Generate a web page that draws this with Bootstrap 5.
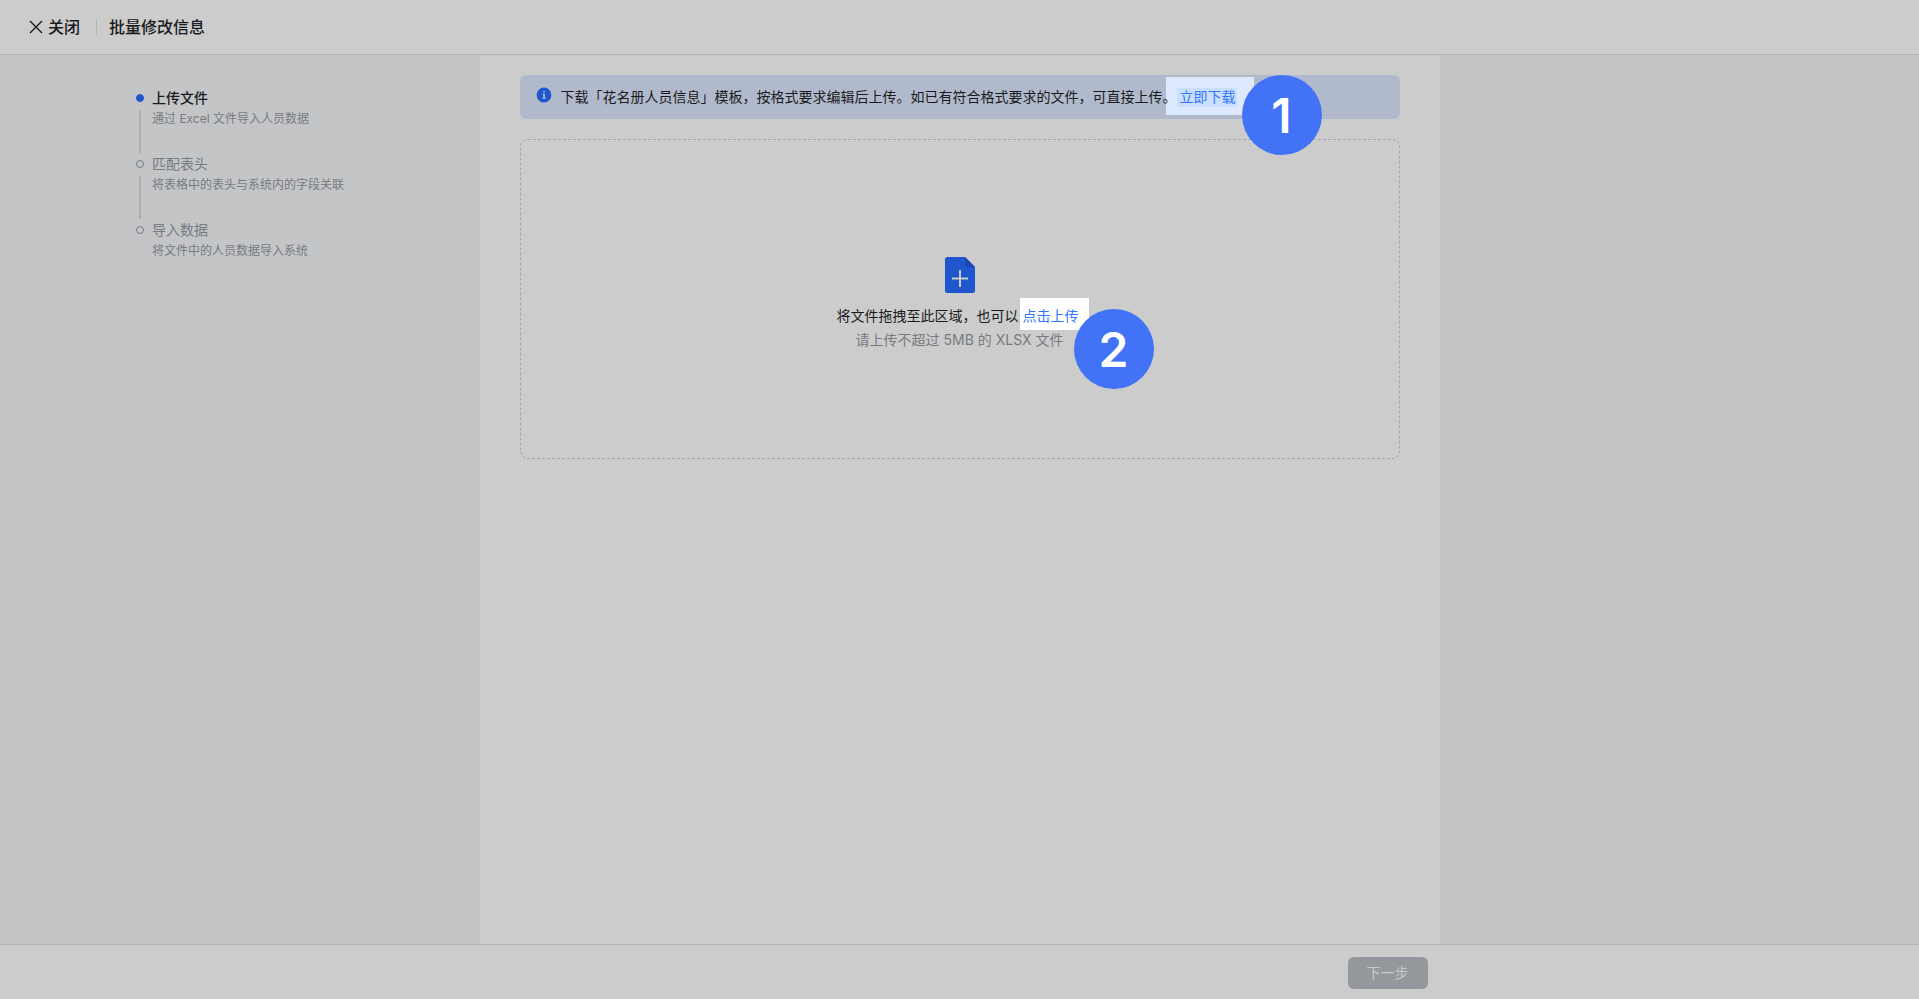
<!DOCTYPE html>
<html lang="zh-CN">
<head>
<meta charset="utf-8">
<meta name="viewport" content="width=device-width, initial-scale=1">
<title>批量修改信息</title>
<link href="https://cdn.jsdelivr.net/npm/bootstrap@5.3.0/dist/css/bootstrap.min.css" rel="stylesheet">
<style>
body { font-family: Inter, "Noto Sans CJK SC", sans-serif; font-size: 14px; line-height: 22px; color: #191b20; background: #c4c5c7; }
.topbar { height: 55px; padding: 0 28px; background: #ccc; border-bottom: 1px solid #b0b2b4; }
.close-btn { font-size: 16px; line-height: 24px; color: #191b20; font-weight: 500; }
.split { width: 1px; height: 16px; background: #b0b2b4; margin: 0 12px 0 16px; }
.page-title { font-size: 16px; line-height: 24px; font-weight: 500; }
.side { flex: 1 1 0; min-width: 0; }
.steps { padding: 32px 0 0 136px; }
.step { height: 66px; color: #777b82; }
.step-mark { width: 8px; padding-top: 7px; }
.step-dot { width: 8px; height: 8px; border: 1px solid #777b82; border-radius: 50%; }
.step-line { width: 2px; height: 43px; margin-top: 8px; background: #abadaf; }
.step-on .step-title { color: #191b20; font-weight: 500; }
.step-on .step-dot { background: #1f56cd; border-color: #1f56cd; }
.step-note { font-size: 12px; line-height: 20px; }
.work { flex: 0 1 960px; background: #ccc; padding: 20px 40px; }
.tip { background: #b1bacc; border-radius: 6px; padding: 11px 16px; min-height: 44px; }
.tip-icon { margin: 1px 9px 0 0; }
.spot { position: relative; z-index: 0; }
.spot::before { content: ""; position: absolute; z-index: -1; }
.spot a, .spot button { color: #3177fb; font-size: 14px; line-height: 22px; }
.spot-download::before { inset: -11px -17px -8px -11px; background: #dee8fe; }
.spot-download a { display: block; line-height: 18px; padding: 0 1px 1px 3px; background: #cadefe; }
.spot-upload::before { inset: -7px -10px -3px -3px; background: #fff; }
.num { position: absolute; z-index: 2; width: 80px; height: 80px; border-radius: 50%; background: #4273f7; color: #fff; font-size: 48px; line-height: 82px; font-weight: 600; text-align: center; }
.num-one { left: 65px; top: -13px; }
.num-two { left: 51px; top: 4px; }
.drop { height: 320px; margin-top: 20px; border: 1px dashed #a5a7a9; border-radius: 8px; padding-top: 117px; }
.drop-line { margin-top: 12px; }
.hint { color: #777b82; margin-top: 2px; }
.bottombar { height: 55px; background: #ccc; border-top: 1px solid #b0b2b4; }
.bottombar-inner { max-width: 960px; padding: 12px; }
.next-btn, .next-btn:disabled { width: 80px; height: 32px; padding: 0 0 2px; border: 0; border-radius: 6px; background: #94979c; color: #c8c9ca; opacity: 1; font-size: 14px; }
</style>
</head>
<body>
<div class="d-flex flex-column min-vh-100">
  <header class="topbar d-flex align-items-center">
    <button type="button" class="close-btn btn p-0 border-0 d-flex align-items-center">
      <svg class="me-1" width="16" height="16" viewBox="0 0 16 16" fill="none" stroke="currentColor" stroke-width="1.4" aria-hidden="true"><path d="M2 2l12 12M14 2L2 14"/></svg>关闭
    </button>
    <span class="split"></span>
    <h1 class="page-title mb-0">批量修改信息</h1>
  </header>

  <div class="d-flex flex-grow-1">
    <aside class="side">
      <ol class="steps list-unstyled mb-0">
        <li class="step step-on d-flex gap-2">
          <div class="step-mark d-flex flex-column align-items-center"><span class="step-dot"></span><span class="step-line"></span></div>
          <div><div class="step-title">上传文件</div><div class="step-note">通过 Excel 文件导入人员数据</div></div>
        </li>
        <li class="step d-flex gap-2">
          <div class="step-mark d-flex flex-column align-items-center"><span class="step-dot"></span><span class="step-line"></span></div>
          <div><div class="step-title">匹配表头</div><div class="step-note">将表格中的表头与系统内的字段关联</div></div>
        </li>
        <li class="step d-flex gap-2">
          <div class="step-mark d-flex flex-column align-items-center"><span class="step-dot"></span></div>
          <div><div class="step-title">导入数据</div><div class="step-note">将文件中的人员数据导入系统</div></div>
        </li>
      </ol>
    </aside>

    <main class="work">
      <div class="tip d-flex">
        <svg class="tip-icon flex-shrink-0" width="16" height="16" viewBox="0 0 16 16" aria-hidden="true"><circle cx="8" cy="8" r="7.4" fill="#1f56cd"/><path d="M7.200 4h1.700v1.600H7.200zM6.500 6.800h2.400v4h.9v.9H6.300v-.9h.9V7.700h-.7z" fill="#b1bacc"/></svg>
        <div class="d-flex flex-wrap align-items-center">
          <span class="position-relative z-1">下载「花名册人员信息」模板，按格式要求编辑后上传。如已有符合格式要求的文件，可直接上传。</span>
          <span class="spot spot-download"><a href="#" class="text-decoration-none">立即下载</a><span class="num num-one">1</span></span>
        </div>
      </div>

      <section class="drop text-center">
        <svg class="d-block mx-auto" width="30" height="36" viewBox="0 0 30 36" aria-hidden="true"><path d="M2.500 0H20l10 10v23.500a2.500 2.500 0 0 1-2.500 2.500h-25A2.500 2.500 0 0 1 0 33.500v-31A2.500 2.500 0 0 1 2.500 0z" fill="#2056cd"/><path d="M20 0l10 10h-7.500A2.500 2.500 0 0 1 20 7.500z" fill="#1847b4"/><path d="M15 13v17M7 21.500h16" stroke="#ccc" stroke-width="2"/></svg>
        <div class="drop-line d-flex justify-content-center">
          <span class="position-relative z-1">将文件拖拽至此区域，也可以</span>
          <span class="spot spot-upload mx-1"><button type="button" class="btn p-0 border-0 d-block">点击上传</button><span class="num num-two">2</span></span>
        </div>
        <div class="hint">请上传不超过 5MB 的 XLSX 文件</div>
      </section>
    </main>
    <div class="side"></div>
  </div>

  <footer class="bottombar">
    <div class="bottombar-inner mx-auto d-flex justify-content-end">
      <button type="button" class="next-btn btn" disabled>下一步</button>
    </div>
  </footer>
</div>
<script src="https://cdn.jsdelivr.net/npm/bootstrap@5.3.0/dist/js/bootstrap.bundle.min.js"></script>
</body>
</html>
